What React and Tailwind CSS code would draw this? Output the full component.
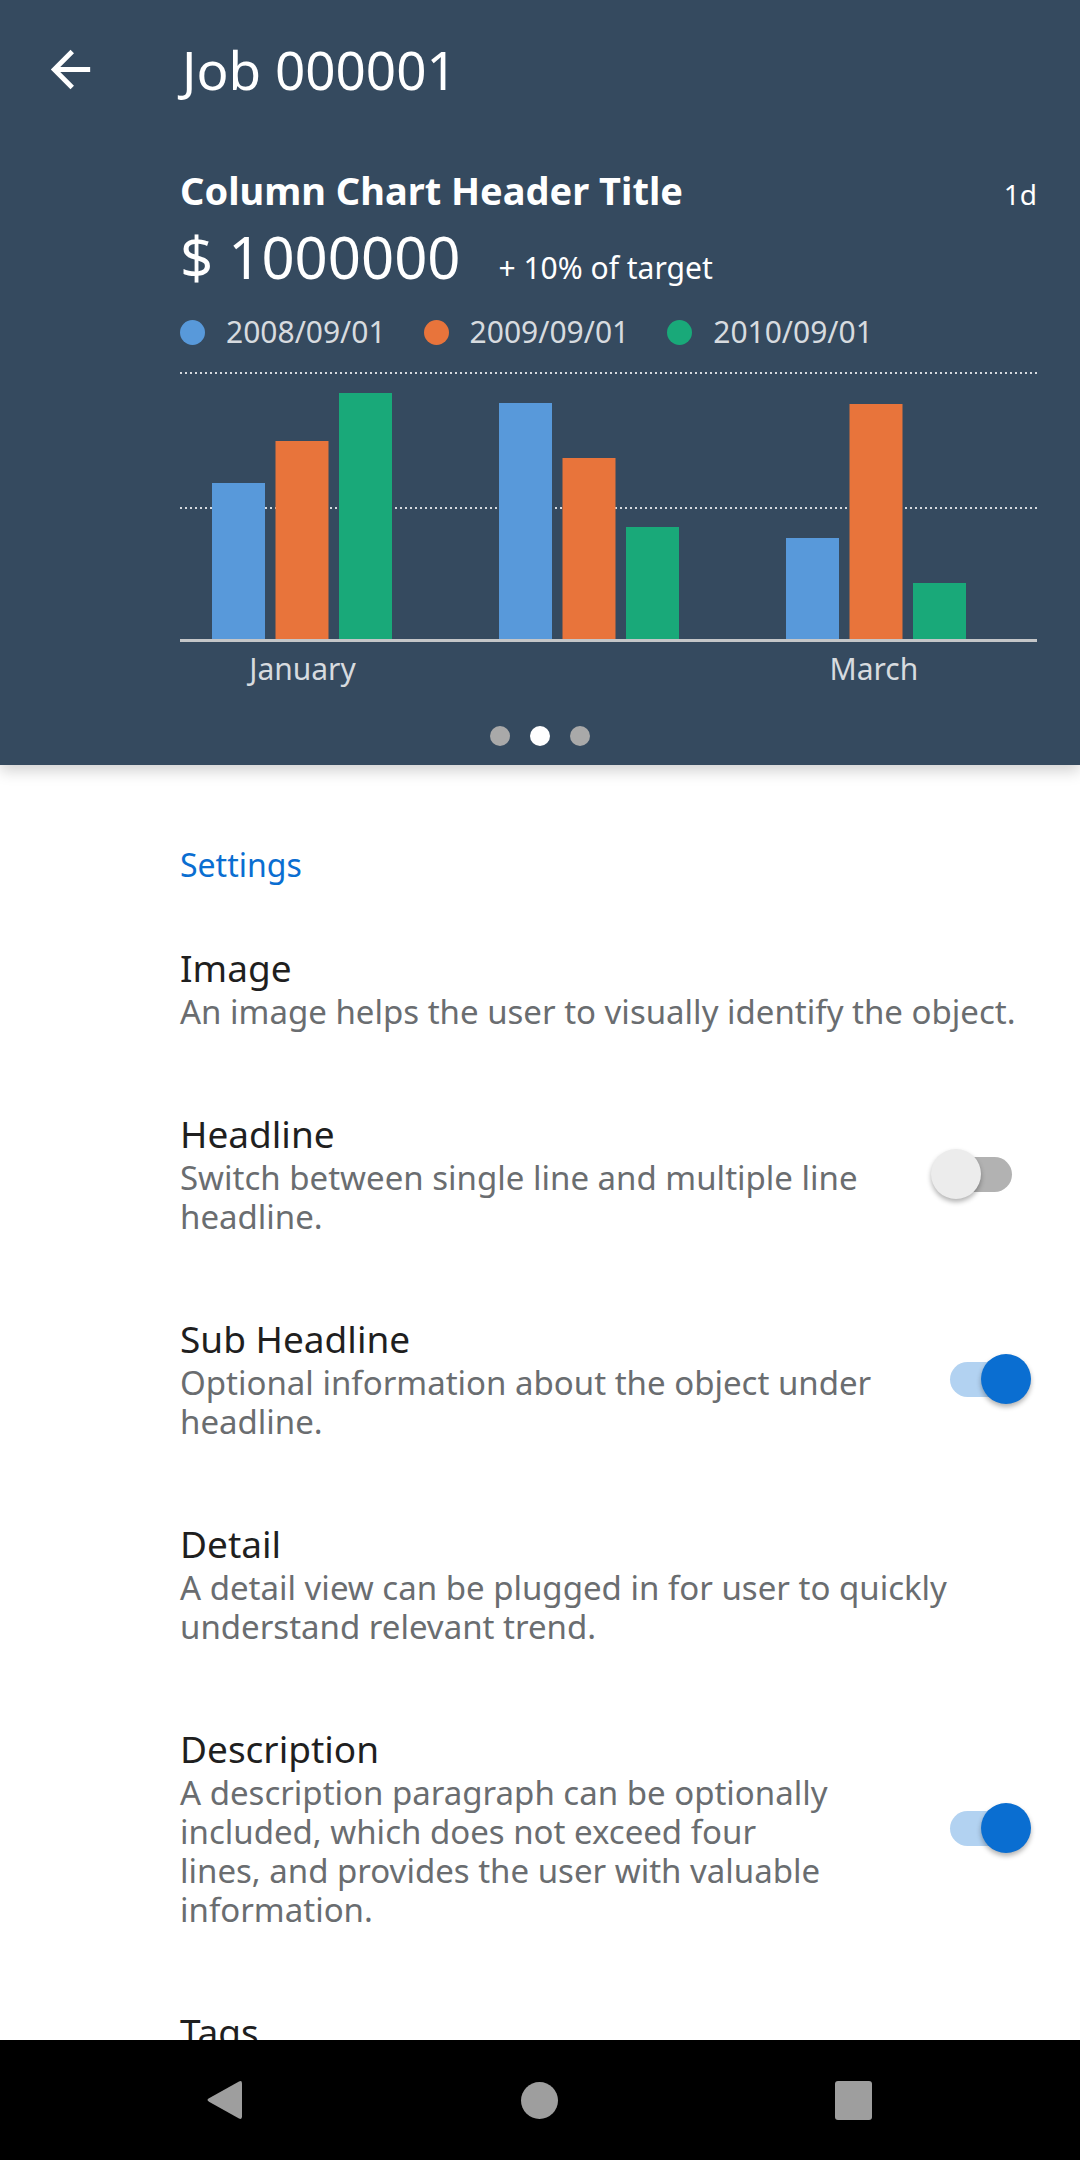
import React from 'react';

const legend = [
    { color: 'bg-[#5899da]', label: '2008/09/01' },
    { color: 'bg-[#e8743b]', label: '2009/09/01' },
    { color: 'bg-[#19a979]', label: '2010/09/01' },
];

// bar tops in chart coords (baseline at y=268)
const groups = [
    { x: 32, tops: [111, 69, 21] },
    { x: 319, tops: [31, 86, 155] },
    { x: 606, tops: [166, 32, 211] },
];
const barColors = ['#5899da', '#e8743b', '#19a979'];

const rows = [
    { title: 'Image', lines: ['An image helps the user to visually identify the object.'], toggle: null },
    { title: 'Headline', lines: ['Switch between single line and multiple line', 'headline.'], toggle: false },
    { title: 'Sub Headline', lines: ['Optional information about the object under', 'headline.'], toggle: true },
    { title: 'Detail', lines: ['A detail view can be plugged in for user to quickly', 'understand relevant trend.'], toggle: null },
    {
        title: 'Description',
        lines: [
            'A description paragraph can be optionally',
            'included, which does not exceed four',
            'lines, and provides the user with valuable',
            'information.',
        ],
        toggle: true,
    },
    { title: 'Tags', lines: [], toggle: null },
];

const Toggle = ({ on }) => (
    <div className="relative w-[100px] h-[50px] shrink-0">
        <div className={`absolute left-[19px] right-[19px] top-[8px] h-[35px] rounded-full ${on ? 'bg-[#b2d2f1]' : 'bg-[#b2b2b2]'}`} />
        <div
            className={`absolute top-0 w-[50px] h-[50px] rounded-full shadow-[0_3px_5px_rgba(0,0,0,0.3)] ${on ? 'right-0 bg-[#0a6ed1]' : 'left-0 bg-[#ececec]'}`}
        />
    </div>
);

const Chart = () => (
    <svg width="857" height="270" viewBox="0 0 857 270" className="block">
        <line x1="0" y1="1" x2="857" y2="1" stroke="#d6dadf" strokeWidth="2" strokeDasharray="2 3" />
        <line x1="0" y1="136" x2="857" y2="136" stroke="#d6dadf" strokeWidth="2" strokeDasharray="2 3" />
        {groups.map((g, gi) =>
            g.tops.map((t, i) => (
                <rect key={`${gi}-${i}`} x={g.x + i * 63.5} y={t} width="53" height={268 - t} fill={barColors[i]} />
            ))
        )}
        <rect x="0" y="267" width="857" height="3" fill="#c4c6c8" />
    </svg>
);

export default function App() {
    return (
        <div className="w-[1080px] h-[2160px] bg-white flex flex-col overflow-hidden" style={{ fontFamily: '"Noto Sans", "Open Sans", sans-serif' }}>
            {/* Header with chart */}
            <div className="h-[765px] shrink-0 bg-[#354a5f] relative z-10 shadow-[0_6px_14px_rgba(0,0,0,0.18)]">
                <div className="h-[138px] flex items-center">
                    <svg className="ml-[41px]" width="59" height="59" viewBox="0 0 24 24" fill="#ffffff">
                        <path d="M20 11H7.83l5.59-5.59L12 4l-8 8 8 8 1.41-1.41L7.83 13H20v-2z" />
                    </svg>
                    <span className="ml-[82px] text-white text-[53px] leading-none">Job 000001</span>
                </div>

                <div className="pl-[180px] pr-[43px] mt-[28px]">
                    <div className="flex items-baseline justify-between">
                        <span className="text-white text-[38px] font-bold leading-[48px]">Column Chart Header Title</span>
                        <span className="text-white text-[28px] leading-[48px]">1d</span>
                    </div>
                    <div className="flex items-baseline mt-[4px]">
                        <span className="text-white text-[58px] leading-[70px]">$ 1000000</span>
                        <span className="ml-[38px] text-white text-[30px] leading-[70px]">+ 10% of target</span>
                    </div>
                    <div className="flex items-center mt-[9px] h-[40px]">
                        {legend.map((l) => (
                            <div key={l.label} className="flex items-center mr-[38px]">
                                <span className={`w-[25px] h-[25px] rounded-full ${l.color}`} />
                                <span className="ml-[21px] text-[30px] leading-[40px] text-[#d7dbdf]">{l.label}</span>
                            </div>
                        ))}
                    </div>
                    <div className="mt-[20px]">
                        <Chart />
                    </div>
                    <div className="flex mt-[7px]">
                        {['January', '', 'March'].map((m, i) => (
                            <div key={i} className="w-[287px] pl-[32px]">
                                <div className="w-[181px] text-center text-[30px] leading-[40px] text-[#d7dbdf]">{m}</div>
                            </div>
                        ))}
                    </div>
                </div>

                <div className="flex justify-center gap-[20px] mt-[37px]">
                    <span className="w-[20px] h-[20px] rounded-full bg-[#a9a9a9]" />
                    <span className="w-[20px] h-[20px] rounded-full bg-white" />
                    <span className="w-[20px] h-[20px] rounded-full bg-[#a9a9a9]" />
                </div>
            </div>

            {/* Settings list */}
            <div className="flex-1 overflow-hidden pt-[79px] pl-[180px] pr-[49px]">
                <div className="text-[32px] leading-[42px] text-[#0a6ed1]">Settings</div>
                <div className="mt-[60px] flex flex-col gap-[81px]">
                    {rows.map((r) => (
                        <div key={r.title} className="flex items-center justify-between">
                            <div className="flex flex-col">
                                <div className="text-[37px] leading-[44px] text-[#1f1f1f]">{r.title}</div>
                                {r.lines.length > 0 && (
                                    <div className="mt-[2px] text-[33px] leading-[39px] text-[#6a6d70]">
                                        {r.lines.map((line) => (
                                            <div key={line} className="whitespace-nowrap">{line}</div>
                                        ))}
                                    </div>
                                )}
                            </div>
                            {r.toggle !== null && <Toggle on={r.toggle} />}
                        </div>
                    ))}
                </div>
            </div>

            {/* System navigation bar */}
            <div className="h-[120px] shrink-0 bg-black flex items-center pl-[68px]">
                <div className="w-[314px] flex justify-center">
                    <svg width="38" height="40" viewBox="0 0 38 40">
                        <path d="M3 18.3 L33 1.5 Q36 0 36 3.5 L36 36.5 Q36 40 33 38.5 L3 21.7 Q0 20 3 18.3 Z" fill="#9e9e9e" />
                    </svg>
                </div>
                <div className="w-[314px] flex justify-center">
                    <span className="w-[37px] h-[37px] rounded-full bg-[#9e9e9e]" />
                </div>
                <div className="w-[314px] flex justify-center">
                    <span className="w-[37px] h-[39px] rounded-[3px] bg-[#9e9e9e]" />
                </div>
            </div>
        </div>
    );
}
